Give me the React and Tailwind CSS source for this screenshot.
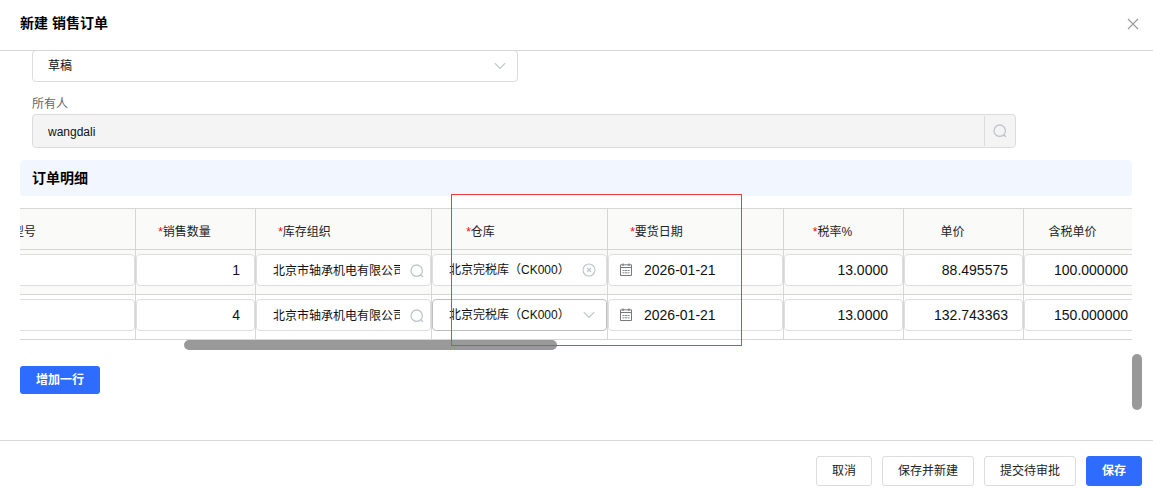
import { useState } from 'react'

const columns = [
  { key: 'spec', title: '型号', width: 'w-[116px]' },
  { key: 'qty', title: '销售数量', required: true, width: 'w-[120px]' },
  { key: 'org', title: '库存组织', required: true, width: 'w-[176px]' },
  { key: 'warehouse', title: '仓库', required: true, width: 'w-[176px]' },
  { key: 'date', title: '要货日期', required: true, width: 'w-[176px]' },
  { key: 'taxRate', title: '税率%', required: true, width: 'w-[120px]' },
  { key: 'price', title: '单价', width: 'w-[120px]' },
  { key: 'taxPrice', title: '含税单价', width: 'w-[120px]' },
]

const initialRows = [
  {
    id: 1,
    spec: '',
    qty: '1',
    org: '北京市轴承机电有限公司',
    warehouse: '北京完税库（CK000）',
    clearable: true,
    date: '2026-01-21',
    taxRate: '13.0000',
    price: '88.495575',
    taxPrice: '100.000000',
  },
  {
    id: 2,
    spec: '',
    qty: '4',
    org: '北京市轴承机电有限公司',
    warehouse: '北京完税库（CK000）',
    date: '2026-01-21',
    taxRate: '13.0000',
    price: '132.743363',
    taxPrice: '150.000000',
  },
]

const SearchIcon = ({ className = '' }) => (
  <svg width="14" height="14" viewBox="0 0 14 14" fill="none" stroke="#c0c4cc" strokeWidth="1.3" className={className}>
    <circle cx="6.7" cy="6.7" r="5.7" />
    <path d="M10.4 10.6 13 13" />
  </svg>
)

const ChevronIcon = ({ className = '' }) => (
  <svg width="12" height="8" viewBox="0 0 12 8" fill="none" stroke="#c0c4cc" strokeWidth="1.2" className={className}>
    <path d="M.8 1.2 6 6.4l5.2-5.2" />
  </svg>
)

const ClearIcon = () => (
  <svg width="14" height="14" viewBox="0 0 14 14" fill="none" stroke="#c0c4cc" strokeWidth="1.1">
    <circle cx="7" cy="7" r="6" />
    <path d="m5 5 4 4M9 5 5 9" />
  </svg>
)

const CalendarIcon = ({ className = '' }) => (
  <svg width="14" height="14" viewBox="0 0 14 14" fill="none" stroke="#77797e" className={className}>
    <path d="M1.5 1.8h11v10.7h-11zM1.5 4.5h11" />
    <path d="M4 .5v2.5M10 .5v2.5" strokeWidth="1.2" />
    <path d="M3.5 7.5h2M6 7.5h2M8.5 7.5h2M3.5 9.8h2M6 9.8h2M8.5 9.8h2" strokeWidth=".9" />
  </svg>
)

const inputBase = 'block h-8 w-full rounded border bg-white text-[#111] outline-none'

function NumberInput({ value, onChange, label }) {
  return (
    <input
      aria-label={label}
      value={value}
      onChange={onChange}
      className={`${inputBase} border-[#dedede] pr-3.5 pl-[15px] text-right text-sm`}
    />
  )
}

function Cell({ column, row, onChange }) {
  const value = row[column.key]
  const label = column.title

  if (column.key === 'org') {
    return (
      <div className="relative">
        <input aria-label={label} value={value} onChange={onChange} className={`${inputBase} border-[#dedede] pr-[30px] pb-0.5 pl-4 text-xs`} />
        <button type="button" aria-label="搜索" className="absolute top-2.5 right-[7px]">
          <SearchIcon />
        </button>
      </div>
    )
  }

  if (column.key === 'warehouse') {
    return (
      <div className="relative">
        <select
          aria-label={label}
          value={value}
          onChange={onChange}
          className={`${inputBase} appearance-none pl-4 text-xs ${row.clearable ? 'border-[#dedede]' : 'border-[#bfbfbf]'}`}
        >
          <option>{value}</option>
        </select>
        {row.clearable ? (
          <button type="button" aria-label="清空" className="absolute top-[9px] right-[11px]">
            <ClearIcon />
          </button>
        ) : (
          <ChevronIcon className="pointer-events-none absolute top-3 right-3" />
        )}
      </div>
    )
  }

  if (column.key === 'date') {
    return (
      <div className="relative">
        <input
          aria-label={label}
          value={value}
          onChange={onChange}
          className={`${inputBase} border-[#dedede] pl-[35px] text-sm`}
        />
        <CalendarIcon className="pointer-events-none absolute top-[9px] left-[11px]" />
      </div>
    )
  }

  // the spec column is only partly in view, so its input starts left of the edge
  if (column.key === 'spec') {
    return (
      <div className="-ml-2">
        <NumberInput label={label} value={value} onChange={onChange} />
      </div>
    )
  }

  return <NumberInput label={label} value={value} onChange={onChange} />
}

function OrderTable({ rows, onChange }) {
  return (
    <div className="relative mt-3">
      <div className="overflow-hidden">
        <table className="w-[1124px] table-fixed border-separate border-spacing-0 border-t border-[#d6d6d6]">
          <thead>
            <tr className="bg-[#fafaf9]">
              {columns.map(col => (
                <th key={col.key} className={`${col.width} h-[41px] border-r border-b border-[#d6d6d6] p-0 pt-1.5 font-normal`}>
                  <div className={`text-xs whitespace-nowrap text-[#222] ${col.key === 'spec' ? '-ml-2 text-left' : 'w-[97px] text-center'}`}>
                    {col.required && <span className="text-[#f00]">*</span>}
                    {col.title}
                  </div>
                </th>
              ))}
            </tr>
          </thead>
          <tbody>
            {rows.map(row => (
              <tr key={row.id} className="odd:bg-[#fafaf9]">
                {columns.map(col => (
                  <td key={col.key} className="border-r border-b border-[#d6d6d6] p-0 pt-1 pb-2">
                    <Cell column={col} row={row} onChange={e => onChange(row.id, col.key, e.target.value)} />
                  </td>
                ))}
              </tr>
            ))}
          </tbody>
        </table>
      </div>
      <div className="ml-[164px] h-2.5 w-[373px] rounded-full bg-[#999]" />

      {/* highlighted area */}
      <div className="pointer-events-none absolute -top-3.5 left-[431px] h-[152px] w-[291px] border border-[#f23c3c]" />
    </div>
  )
}

function FooterButton({ primary, children }) {
  return (
    <button
      type="button"
      className={`h-[30px] rounded-[3px] border px-[15px] text-xs ${primary ? 'border-[#2e6bff] bg-[#2e6bff] font-bold text-white' : 'border-[#dcdcdc] bg-white text-[#222]'}`}
    >
      {children}
    </button>
  )
}

export default function App() {
  const [rows, setRows] = useState(initialRows)
  const [status, setStatus] = useState('草稿')

  const updateRow = (id, key, value) =>
    setRows(prev => prev.map(row => (row.id === id ? { ...row, [key]: value } : row)))

  const addRow = () =>
    setRows(prev => [
      ...prev,
      { id: prev.length + 1, spec: '', qty: '', org: '', warehouse: '', date: '', taxRate: '', price: '', taxPrice: '' },
    ])

  return (
    <div className="flex h-screen flex-col bg-white font-['Liberation_Sans','Noto_Sans_CJK_SC',sans-serif] text-[#111]">
      <header className="flex shrink-0 items-center justify-between border-b border-[#d8d8d8] pt-[11px] pr-3.5 pb-[15px] pl-5">
        <h1 className="text-sm leading-6 font-bold text-black">新建 销售订单</h1>
        <button type="button" aria-label="关闭" className="pt-0.5">
          <svg width="12" height="12" viewBox="0 0 12 12" fill="none" stroke="#999" strokeWidth="1.1">
            <path d="m1 1 10 10M11 1 1 11" />
          </svg>
        </button>
      </header>

      <main className="relative min-h-0 flex-1 overflow-hidden pr-[21px] pl-5">
        <div className="-mt-px grid grid-cols-2 gap-x-3 pr-[116px] pl-3">
          <div className="relative">
            <select
              aria-label="状态"
              value={status}
              onChange={e => setStatus(e.target.value)}
              className={`${inputBase} appearance-none border-[#dcdcdc] pl-[15px] text-xs`}
            >
              <option>草稿</option>
            </select>
            <ChevronIcon className="pointer-events-none absolute top-3 right-3" />
          </div>

          <div className="col-span-2">
            <label htmlFor="owner" className="block pt-3.5 pb-0.5 text-xs leading-4 text-[#666]">所有人</label>
            <div className="flex h-[34px] rounded border border-[#dcdcdc] bg-[#f4f4f4] py-px">
              <input id="owner" readOnly value="wangdali" className="min-w-0 flex-1 bg-transparent px-[15px] pt-0.5 text-xs outline-none" />
              <button type="button" aria-label="搜索" className="flex w-[31px] items-center justify-center border-l border-[#dcdcdc]">
                <SearchIcon />
              </button>
            </div>
          </div>
        </div>

        <h2 className="mt-3 h-9 rounded bg-[#f2f7ff] pl-3 text-sm leading-9 font-bold text-black">订单明细</h2>

        <OrderTable rows={rows} onChange={updateRow} />

        <button type="button" onClick={addRow} className="mt-4 h-7 rounded-[3px] bg-[#2e6bff] px-4 text-xs font-bold text-white">
          增加一行
        </button>

        <div className="absolute right-[11px] bottom-[30px] h-14 w-2.5 rounded-full bg-[#999]" />
      </main>

      <footer className="flex shrink-0 justify-end gap-2.5 border-t border-[#d8d8d8] pt-[15px] pr-[11px] pb-[5px]">
        <FooterButton>取消</FooterButton>
        <FooterButton>保存并新建</FooterButton>
        <FooterButton>提交待审批</FooterButton>
        <FooterButton primary>保存</FooterButton>
      </footer>
    </div>
  )
}
